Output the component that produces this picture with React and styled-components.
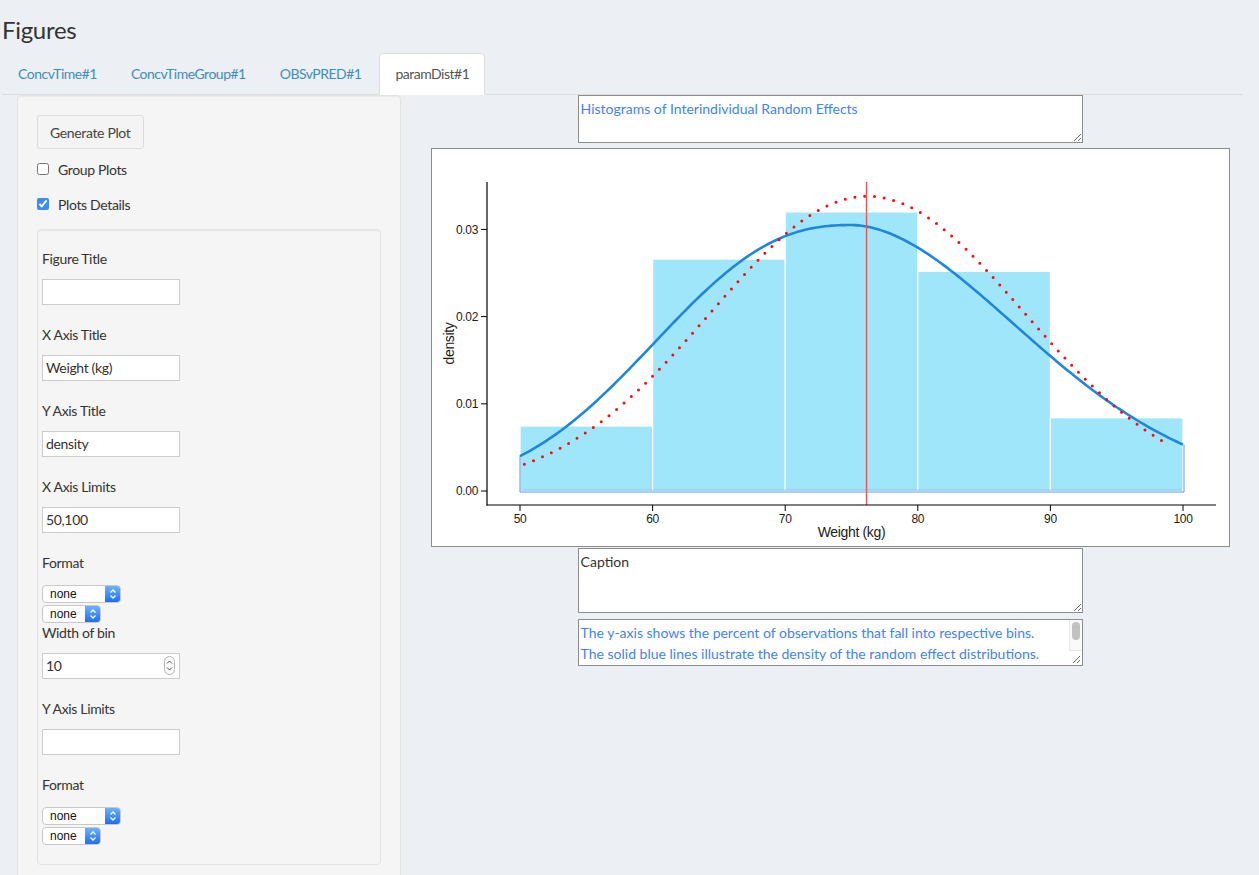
import React from "react";
import styled, { createGlobalStyle } from "styled-components";

const Global = createGlobalStyle`
  body {
    margin: 0;
    background: #ecf0f5;
    font-family: Lato, "Open Sans", sans-serif;
    font-size: 14px;
    letter-spacing: -0.35px;
    color: #333;
  }
  * { box-sizing: border-box; }
`;

const Page = styled.div`
  width: 1241px;
  margin-left: 2px;
`;

const Heading = styled.h3`
  margin: 16px 0 10px;
  font-size: 24px;
  font-weight: 400;
  line-height: 27px;
  letter-spacing: -0.3px;
  color: #333;
`;

const Tabs = styled.ul`
  display: flex;
  list-style: none;
  margin: 0;
  padding: 0;
  border-bottom: 1px solid #ddd;
`;

const Tab = styled.li`
  margin-right: 2px;
  margin-bottom: -1px;
  padding: 10px 15px;
  line-height: 20px;
  letter-spacing: -0.5px;
  border: 1px solid ${p => (p.$active ? "#ddd" : "transparent")};
  border-bottom-color: transparent;
  border-radius: 4px 4px 0 0;
  background: ${p => (p.$active ? "#fff" : "transparent")};
  color: ${p => (p.$active ? "#555" : "#3c8dbc")};
`;

const Row = styled.div`
  display: flex;
  align-items: flex-start;
`;

const LeftCol = styled.div`
  flex: none;
  width: 413.6px;
  padding: 0 15px;
`;

const RightCol = styled.div`
  flex: 1;
  padding: 0 15px;
  display: flex;
  flex-direction: column;
  align-items: center;
`;

const Well = styled.div`
  background: #f5f5f5;
  border: 1px solid #e3e3e3;
  border-radius: 4px;
  box-shadow: inset 0 1px 1px rgba(0, 0, 0, 0.05);
  padding: ${p => (p.$inner ? "19px 4px" : "19px")};
  margin-top: ${p => (p.$inner ? "15px" : "0")};
`;

const Button = styled.button`
  display: block;
  height: 34px;
  padding: 6px 12px;
  font: inherit;
  letter-spacing: inherit;
  color: #444;
  background: #f4f4f4;
  border: 1px solid #ddd;
  border-radius: 3px;
`;

const CheckRow = styled.label`
  display: flex;
  align-items: center;
  gap: 9px;
  height: 20px;
  margin-top: ${p => p.$mt}px;
  color: #333;
`;

const Check = styled.input`
  width: 12px;
  height: 12px;
  margin: 0;
  accent-color: #3b8df5;
`;

const Label = styled.div`
  line-height: 20px;
  margin-bottom: ${p => p.$mb ?? 10}px;
  color: #333;
`;

const Field = styled.div`
  position: relative;
  width: 138px;
  height: 26px;
  margin-bottom: 20px;
  padding: 0 3px;
  border: 1px solid #ccc;
  background: #fff;
  line-height: 24px;
  color: #333;
`;

const Spinner = styled.div`
  position: absolute;
  right: 4px;
  top: 2px;
  width: 11px;
  height: 19px;
  border: 1px solid #b5b5b5;
  border-radius: 6px;
  background: #fafafa;
  display: flex;
  align-items: center;
  justify-content: center;
`;

const SelectBox = styled.div`
  display: flex;
  width: ${p => p.$w}px;
  height: 18px;
  margin-bottom: ${p => p.$mb}px;
  border: 1px solid #c8c8c8;
  border-radius: 4px;
  background: #fff;
  overflow: hidden;
  font: 12px "Liberation Sans", Arial, sans-serif;
  letter-spacing: 0;
  color: #111;
`;

const SelectText = styled.div`
  flex: 1;
  padding-left: 7px;
  line-height: 16px;
`;

const SelectArrow = styled.div`
  width: 15px;
  background: linear-gradient(#6cb2fb, #1c6ff0);
  display: flex;
  align-items: center;
  justify-content: center;
`;

const Area = styled.textarea`
  display: block;
  width: 505px;
  height: ${p => p.$h}px;
  margin: 0 0 ${p => p.$mb}px;
  padding: 2px;
  border: 1px solid #8c8c8c;
  background: #fff;
  font: 14px Lato, "Open Sans", sans-serif;
  letter-spacing: 0;
  line-height: 21px;
  color: ${p => (p.$blue ? "#3f84f1" : "#333")};
  overflow: hidden;
`;

const NoteBox = styled.div`
  position: relative;
  width: 505px;
  height: 47px;
  padding: 2px 16px 2px 2px;
  border: 1px solid #8c8c8c;
  background: #fff;
  font-size: 14px;
  letter-spacing: 0;
  line-height: 21px;
  color: #3f84f1;
  overflow: hidden;
  white-space: nowrap;
`;

const ScrollTrack = styled.div`
  position: absolute;
  top: 0;
  right: 0;
  width: 13px;
  height: 31px;
  background: #fafafa;
  border-left: 1px solid #e6e6e6;
  border-bottom: 1px solid #e6e6e6;
  padding: 2px 2px;
`;

const ScrollThumb = styled.div`
  width: 8px;
  height: 18px;
  border-radius: 4px;
  background: #c2c2c2;
`;

const Grip = styled.svg`
  position: absolute;
  right: 1px;
  bottom: 1px;
`;

const PlotBox = styled.div`
  width: 799px;
  height: 399px;
  margin-bottom: 1px;
  border: 1px solid #8c8c8c;
  background: #fff;
  svg { display: block; }
`;

const X = v => 520 + (v - 50) * 13.26;
const Y = d => 491 - d * 8720;

const bars = [
  [50, 60, 0.00745],
  [60, 70, 0.0266],
  [70, 80, 0.032],
  [80, 90, 0.0252],
  [90, 100, 0.0084],
];

// kernel density, a little skewed: flatter on the right
function densityPath() {
  const pts = [];
  for (let v = 50; v <= 100.001; v += 0.25) {
    const left = v < 75;
    const a = left ? 18.6 : 18.5;
    const b = left ? 2.4 : 1.85;
    const d = 0.0305 * Math.exp(-((Math.abs(v - 75) / a) ** b));
    pts.push(`${X(v).toFixed(2)},${Y(d).toFixed(2)}`);
  }
  return "M" + pts.join(" L");
}

function normalPath() {
  const pts = [];
  for (let v = 50.33; v <= 98.8; v += 0.2) {
    const d = 0.0338 * Math.exp(-((v - 76.2) ** 2) / (2 * 11.8 * 11.8));
    pts.push(`${X(v).toFixed(2)},${Y(d).toFixed(2)}`);
  }
  return "M" + pts.join(" L");
}

function Chart() {
  const axis = { fontFamily: '"Liberation Sans", Arial, sans-serif', fill: "#1a1a1a" };
  return (
    <svg width="797" height="397" viewBox="432 149 797 397">
      {bars.map(([a, b, d]) => (
        <rect key={a} x={X(a)} y={Y(d)} width={X(b) - X(a)} height={Y(0) - Y(d)}
          fill="#a0e6fb" stroke="#fff" strokeWidth="1.2" />
      ))}
      <path d={`M${X(50)},${Y(0.004)} V${Y(0) + 1} H${X(100) + 1} V${Y(0.0053)}`}
        fill="none" stroke="#5a9be6" strokeWidth="1" />
      <path d={`M${X(50) + 2},${Y(0) - 1} H${X(100) - 1}`} stroke="#8cc0ef" strokeWidth="1" />
      <path d={densityPath()} fill="none" stroke="#1f86dd" strokeWidth="2.6" strokeLinejoin="round" />
      <path d={normalPath()} fill="none" stroke="#ff0a0a" strokeWidth="3"
        strokeLinecap="round" strokeDasharray="0 9.8" />
      <line x1="866.5" y1="182" x2="866.5" y2="505" stroke="#f0504d" strokeWidth="1.3" />
      <line x1="487" y1="182" x2="487" y2="505.6" stroke="#000" strokeWidth="1.2" />
      <line x1="486.4" y1="505" x2="1216" y2="505" stroke="#000" strokeWidth="1.2" />
      {[0, 0.01, 0.02, 0.03].map(d => (
        <g key={d}>
          <line x1="481" y1={Y(d)} x2="487" y2={Y(d)} stroke="#000" strokeWidth="1" />
          <text x="478" y={Y(d) + 4.2} textAnchor="end" fontSize="12" {...axis}>{d.toFixed(2)}</text>
        </g>
      ))}
      {[50, 60, 70, 80, 90, 100].map(v => (
        <g key={v}>
          <line x1={X(v)} y1="505" x2={X(v)} y2="511" stroke="#000" strokeWidth="1" />
          <text x={X(v)} y="523" textAnchor="middle" fontSize="12" {...axis}>{v}</text>
        </g>
      ))}
      <text x="851.5" y="537" textAnchor="middle" fontSize="14" {...axis}>Weight (kg)</text>
      <text transform="translate(454 343.5) rotate(-90)" textAnchor="middle" fontSize="14" {...axis}>density</text>
    </svg>
  );
}

function Select({ w, mb }) {
  return (
    <SelectBox $w={w} $mb={mb}>
      <SelectText>none</SelectText>
      <SelectArrow>
        <svg width="8" height="12" viewBox="0 0 8 12">
          <path d="M1.5 4.5 L4 2 L6.5 4.5 M1.5 7.5 L4 10 L6.5 7.5" fill="none" stroke="#fff" strokeWidth="1.3" />
        </svg>
      </SelectArrow>
    </SelectBox>
  );
}

function Input({ label, value }) {
  return (
    <>
      <Label>{label}</Label>
      <Field>{value}</Field>
    </>
  );
}

function FormatGroup() {
  return (
    <>
      <Label $mb={12}>Format</Label>
      <Select w={79} mb={2} />
      <Select w={59} mb={0} />
    </>
  );
}

export default function App() {
  return (
    <Page>
      <Global />
      <Heading>Figures</Heading>
      <Tabs>
        <Tab>ConcvTime#1</Tab>
        <Tab>ConcvTimeGroup#1</Tab>
        <Tab>OBSvPRED#1</Tab>
        <Tab $active>paramDist#1</Tab>
      </Tabs>
      <Row>
        <LeftCol>
          <Well>
            <Button>Generate Plot</Button>
            <CheckRow $mt={10}>
              <Check type="checkbox" readOnly />
              Group Plots
            </CheckRow>
            <CheckRow $mt={15}>
              <Check type="checkbox" checked readOnly />
              Plots Details
            </CheckRow>
            <Well $inner>
              <Input label="Figure Title" value="" />
              <Input label="X Axis Title" value="Weight (kg)" />
              <Input label="Y Axis Title" value="density" />
              <Input label="X Axis Limits" value="50,100" />
              <FormatGroup />
              <Label>Width of bin</Label>
              <Field>
                10
                <Spinner>
                  <svg width="7" height="13" viewBox="0 0 7 13">
                    <path d="M1 4.5 L3.5 2 L6 4.5 M1 8.5 L3.5 11 L6 8.5" fill="none" stroke="#555" strokeWidth="1" />
                  </svg>
                </Spinner>
              </Field>
              <Input label="Y Axis Limits" value="" />
              <FormatGroup />
            </Well>
          </Well>
        </LeftCol>
        <RightCol>
          <Area $h={48} $mb={5} $blue readOnly value="Histograms of Interindividual Random Effects" />
          <PlotBox>
            <Chart />
          </PlotBox>
          <Area $h={65} $mb={6} readOnly value="Caption" />
          <NoteBox>
            <div>The y-axis shows the percent of observations that fall into respective bins.</div>
            <div>The solid blue lines illustrate the density of the random effect distributions.</div>
            <ScrollTrack>
              <ScrollThumb />
            </ScrollTrack>
            <Grip width="9" height="9" viewBox="0 0 9 9">
              <path d="M1 8 L8 1 M5 8 L8 5" stroke="#666" strokeWidth="1" />
            </Grip>
          </NoteBox>
        </RightCol>
      </Row>
    </Page>
  );
}
